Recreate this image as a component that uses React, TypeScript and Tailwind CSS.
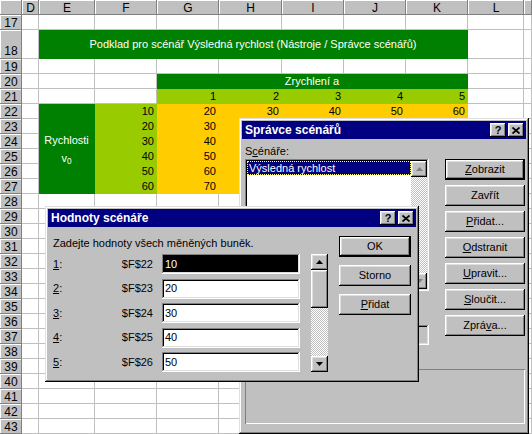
import type { ReactNode } from 'react';

const COLS = ['D', 'E', 'F', 'G', 'H', 'I', 'J', 'K', 'L', ''];
const white = 'border-[#c0c0c0] bg-white';
const green = 'border-[#008000] bg-[#008000] text-white';
const lime = 'border-[#99cc00] bg-[#99cc00]';
const yellow = 'border-[#ffcc00] bg-[#ffcc00]';
const raised = 'shadow-[inset_-1px_-1px_#000,inset_1px_1px_#fff,inset_-2px_-2px_#808080,inset_2px_2px_#dfdfdf]';
const sunken = 'shadow-[inset_-1px_-1px_#fff,inset_1px_1px_#808080,inset_-2px_-2px_#dfdfdf,inset_2px_2px_#000]';
const dither = 'bg-[image:repeating-conic-gradient(#c0c0c0_0%_25%,#ffffff_0%_50%)] bg-[length:2px_2px]';

function Head({ children, className = '' }: { children?: ReactNode; className?: string }) {
  return (
    <div
      className={`flex justify-center bg-[#c0c0c0] text-[12px] leading-none text-black shadow-[inset_-1px_-1px_#808080,inset_1px_1px_#fff] ${className}`}
    >
      {children}
    </div>
  );
}

function Cell({ children, className = white }: { children?: ReactNode; className?: string }) {
  return (
    <div className={`flex items-center overflow-hidden whitespace-nowrap border-r border-b px-[2px] text-[11px] leading-none ${className}`}>
      {children}
    </div>
  );
}

function SheetRow({ n }: { n: number }) {
  const base = 10 * (n - 21);
  return (
    <>
      <Head className={n === 18 ? 'items-end pb-[2px]' : 'items-center'}>{n}</Head>
      <Cell />
      {n === 18 && (
        <Cell className={`col-span-7 justify-center ${green}`}>
          Podklad pro scénář Výsledná rychlost (Nástroje / Správce scénářů)
        </Cell>
      )}
      {n === 20 && (
        <>
          <Cell />
          <Cell />
          <Cell className={`col-span-5 justify-center ${green}`}>Zrychlení a</Cell>
        </>
      )}
      {n === 21 && (
        <>
          <Cell />
          <Cell />
          {[1, 2, 3, 4, 5].map((v) => (
            <Cell className={`justify-end ${lime}`} key={v}>
              {v}
            </Cell>
          ))}
        </>
      )}
      {n >= 22 && n <= 27 && (
        <>
          {n === 22 && (
            <div className={`row-span-6 flex flex-col items-center justify-center border-r border-b text-[11px] leading-[18px] ${green}`}>
              <span>Rychlosti</span>
              <span>
                v<sub>0</sub>
              </span>
            </div>
          )}
          <Cell className={`justify-end ${lime}`}>{base}</Cell>
          {[1, 2, 3, 4, 5].map((k) => (
            <Cell className={`justify-end ${yellow}`} key={k}>
              {base + 10 * k}
            </Cell>
          ))}
        </>
      )}
      {(n === 17 || n === 19 || n >= 28) && [0, 1, 2, 3, 4, 5, 6].map((k) => <Cell key={k} />)}
      <Cell />
      <Cell />
    </>
  );
}

function Sheet() {
  const rows = [];
  for (let n = 17; n <= 43; n++) rows.push(<SheetRow key={n} n={n} />);
  return (
    <div className="grid h-[434px] grid-cols-[22px_17px_56px_62px_62px_63px_62px_62px_62px_56px_8px] grid-rows-[15px_15px_29px_repeat(25,15px)] bg-white">
      <Head />
      {COLS.map((c, i) => (
        <Head className="items-center" key={i}>
          {c}
        </Head>
      ))}
      {rows}
    </div>
  );
}

function Arrow({ up, gray }: { up?: boolean; gray?: boolean }) {
  return (
    <svg height="4" viewBox="0 0 7 4" width="7">
      <polygon fill={gray ? '#808080' : '#000'} points={up ? '3.5,0 7,4 0,4' : '0,0 7,0 3.5,4'} />
    </svg>
  );
}

function Btn({ children, def, className = '' }: { children: ReactNode; def?: boolean; className?: string }) {
  return (
    <div className={`flex h-[21px] items-center justify-center bg-[#c0c0c0] ${def ? 'border border-black' : ''} ${className}`}>
      <div className={`flex h-full w-full items-center justify-center text-[11px] ${raised}`}>{children}</div>
    </div>
  );
}

function TitleBtn({ children }: { children: ReactNode }) {
  return (
    <div className={`flex h-[14px] w-[16px] items-center justify-center bg-[#c0c0c0] text-[11px] font-bold leading-none text-black ${raised}`}>
      {children}
    </div>
  );
}

function Win({ title, className, children }: { title: string; className: string; children: ReactNode }) {
  return (
    <div
      className={`absolute flex flex-col bg-[#c0c0c0] p-[3px] text-black shadow-[inset_-1px_-1px_#000,inset_1px_1px_#dfdfdf,inset_-2px_-2px_#808080,inset_2px_2px_#fff] ${className}`}
    >
      <div className="flex h-[18px] items-center gap-[2px] bg-[#000080] pl-[3px] pr-[2px]">
        <span className="flex-1 text-[12px] font-bold text-white">{title}</span>
        <TitleBtn>?</TitleBtn>
        <TitleBtn>
          <svg height="7" viewBox="0 0 8 7" width="8">
            <path d="M0.5 0.5L7.5 6.5M7.5 0.5L0.5 6.5" stroke="#000" strokeWidth="1.7" />
          </svg>
        </TitleBtn>
      </div>
      {children}
    </div>
  );
}

function ScrollBtn({ children }: { children: ReactNode }) {
  return <div className={`flex h-[16px] shrink-0 items-center justify-center bg-[#c0c0c0] ${raised}`}>{children}</div>;
}

function ScenarioManager() {
  return (
    <Win className="left-[239px] top-[118px] h-[316px] w-[290px]" title="Správce scénářů">
      <div className="flex flex-1 flex-col pl-[3px] pr-[1px]">
        <div className="flex gap-[16px]">
          <div className="flex w-[184px] flex-col">
            <span className="mt-[6px] mb-[1px] h-[13px] text-[11px] leading-[13px]">
              S<u>c</u>énáře:
            </span>
            <div className={`flex h-[132px] bg-white p-[2px] ${sunken}`}>
              <div className="flex-1">
                <div className="h-[14px] border border-dotted border-[#ffff80] bg-[#000080] pl-[1px] text-[11px] leading-[12px] text-white">
                  Výsledná rychlost
                </div>
              </div>
              <div className="flex w-[16px] flex-col">
                <ScrollBtn>
                  <Arrow gray up />
                </ScrollBtn>
                <div className={`flex-1 ${dither}`} />
                <ScrollBtn>
                  <Arrow gray />
                </ScrollBtn>
              </div>
            </div>
            <span className="mt-[18px] mb-[3px] h-[13px] text-[11px] leading-[13px]">
              <u>M</u>ěněné buňky:
            </span>
            <div className={`flex h-[20px] items-center bg-[#c0c0c0] pl-[4px] text-[11px] ${sunken}`}>$F$22:$F$27</div>
          </div>
          <div className="flex w-[80px] flex-col gap-[5px] pt-[20px]">
            <Btn def>
              <u>Z</u>obrazit
            </Btn>
            <Btn>Zavřít</Btn>
            <Btn>
              <u>P</u>řidat...
            </Btn>
            <Btn>
              <u>O</u>dstranit
            </Btn>
            <Btn>
              <u>U</u>pravit...
            </Btn>
            <Btn>
              <u>S</u>loučit...
            </Btn>
            <Btn>
              Zprá<u>v</u>a...
            </Btn>
          </div>
        </div>
        <span className="mt-[9px] mb-[2px] h-[13px] text-[11px] leading-[13px]">Komentář:</span>
        <div className="h-[55px] shadow-[inset_1px_1px_#808080,inset_-1px_-1px_#fff]" />
      </div>
    </Win>
  );
}

function ScenarioValues() {
  const rows = [
    ['1', '$F$22', '10'],
    ['2', '$F$23', '20'],
    ['3', '$F$24', '30'],
    ['4', '$F$25', '40'],
    ['5', '$F$26', '50'],
  ];
  return (
    <Win className="left-[45px] top-[206px] h-[176px] w-[374px]" title="Hodnoty scénáře">
      <div className="flex pl-[5px]">
        <div className="flex flex-col pt-[10px]">
          <span className="h-[13px] text-[11px] leading-[13px]">Zadejte hodnoty všech měněných buněk.</span>
          <div className="mt-[4px] flex">
            <div className="flex w-[247px] flex-col gap-[4.5px]">
              {rows.map(([k, ref, v], i) => (
                <div className="flex h-[20px] items-center text-[11px]" key={k}>
                  <div className="flex w-[100px] justify-between">
                    <span>
                      <u>{k}</u>:
                    </span>
                    <span>{ref}</span>
                  </div>
                  <div className={`ml-[9px] flex h-[20px] w-[138px] items-center bg-white p-[2px] ${sunken}`}>
                    <div className={`flex h-full w-full items-center pl-[1px] ${i === 0 ? 'bg-black text-white' : ''}`}>{v}</div>
                  </div>
                </div>
              ))}
            </div>
            <div className="ml-[11px] flex h-[118px] w-[17px] flex-col">
              <ScrollBtn>
                <Arrow up />
              </ScrollBtn>
              <div className={`h-[38px] shrink-0 bg-[#c0c0c0] ${raised}`} />
              <div className={`flex-1 ${dither}`} />
              <ScrollBtn>
                <Arrow />
              </ScrollBtn>
            </div>
          </div>
        </div>
        <div className="ml-[11px] flex w-[72px] flex-col gap-[8px] pt-[9px]">
          <Btn def>OK</Btn>
          <Btn>Storno</Btn>
          <Btn>
            <u>P</u>řidat
          </Btn>
        </div>
      </div>
    </Win>
  );
}

export default function App() {
  return (
    <div className="relative h-[434px] w-[532px] overflow-hidden font-['Liberation_Sans',Arial,sans-serif] text-black">
      <Sheet />
      <ScenarioManager />
      <ScenarioValues />
    </div>
  );
}
